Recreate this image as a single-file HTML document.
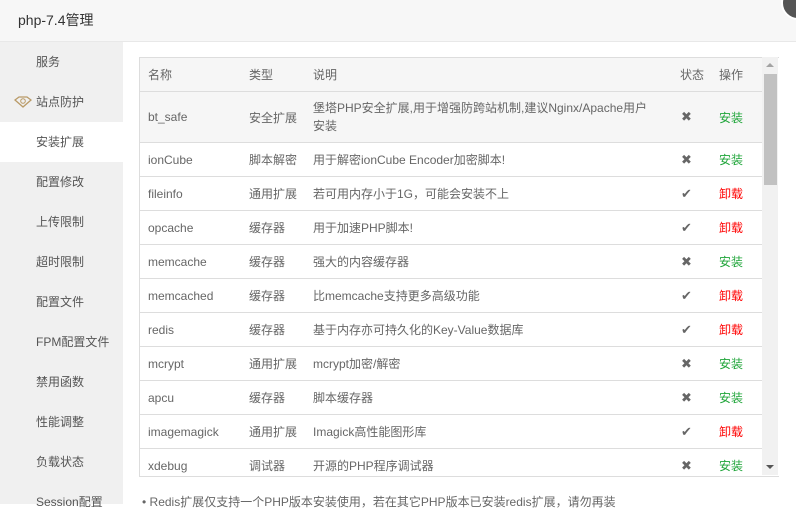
<!DOCTYPE html><html><head><meta charset="utf-8"><style>
body{margin:0;width:796px;height:504px;overflow:hidden;background:#fff;font-family:"Liberation Sans","Noto Sans CJK SC",sans-serif;font-size:12px;color:#666;position:relative}
.hd{position:absolute;left:0;top:0;width:796px;height:41px;background:#f7f7f7;border-bottom:1px solid #e8e8e8;font-size:14px;color:#333;line-height:41px;text-indent:18px}
.cl{position:absolute;left:781px;top:-14px;width:30px;height:30px;border-radius:50%;background:#555;border:2px solid #fff}
.sb{position:absolute;left:0;top:42px;width:123px;height:462px;background:#f0f0f0}
.sb div{height:40px;line-height:40px;padding-left:36px;color:#555;font-size:12px}
.sb .on{background:#fff}
.tb{position:absolute;left:139px;top:57px;width:639px;height:418px;border:1px solid #ddd;border-right:none;overflow:hidden}
table{border-collapse:collapse;width:623px;table-layout:fixed}
td{border-bottom:1px solid #ddd;height:33px;padding:0;color:#666;vertical-align:middle}
td:nth-child(1){padding-left:8px}
tr.h td{background:#f6f6f6;height:33px;color:#666}
.g{color:#20a53a}.r{color:#f00}.i{font-size:13px;color:#666;padding-left:1px}
.scr{position:absolute;left:762px;top:57px;width:16px;height:418px;background:#f1f1f1}
.th{position:absolute;left:2px;top:17px;width:13px;height:111px;background:#c1c1c1}
.ua{position:absolute;left:4px;top:6px;border:4px solid transparent;border-bottom:4px solid #a3a3a3;border-top:none}
.da{position:absolute;left:4px;top:408px;border:4px solid transparent;border-top:4px solid #555;border-bottom:none}
.ft{position:absolute;left:142px;top:493px;color:#666}
.dm{position:absolute;left:14px;top:14px;width:11px;height:8px;border:1px solid #c2a677;transform:none;clip-path:polygon(0 0,100% 0,50% 100%)}
</style></head><body>
<div class="hd">php-7.4管理</div><div class="cl"></div>
<div class="sb"><div>服务</div><div style="position:relative"><svg style="position:absolute;left:14px;top:14px" width="18" height="12" viewBox="0 0 18 12"><path d="M1 4 L5 1 H13 L17 4 L9 11 Z" fill="none" stroke="#b99a66" stroke-width="1.3"/><circle cx="9" cy="5" r="2.3" fill="none" stroke="#b99a66"/></svg>站点防护</div><div class="on">安装扩展</div><div>配置修改</div><div>上传限制</div><div>超时限制</div><div>配置文件</div><div>FPM配置文件</div><div>禁用函数</div><div>性能调整</div><div>负载状态</div><div>Session配置</div></div>
<div class="tb"><table>
<colgroup><col style="width:109px"><col style="width:64px"><col style="width:367px"><col style="width:39px"><col style="width:44px"></colgroup>
<tr class="h"><td>名称</td><td>类型</td><td>说明</td><td>状态</td><td>操作</td></tr>
<tr style="background:#f6f6f6"><td style="height:50px">bt_safe</td><td>安全扩展</td><td style="line-height:18px;padding-right:22px">堡塔PHP安全扩展,用于增强防跨站机制,建议Nginx/Apache用户安装</td><td class="i">✖</td><td class="g">安装</td></tr>
<tr><td>ionCube</td><td>脚本解密</td><td>用于解密ionCube Encoder加密脚本!</td><td class="i">✖</td><td class="g">安装</td></tr>
<tr><td>fileinfo</td><td>通用扩展</td><td>若可用内存小于1G，可能会安装不上</td><td class="i">✔</td><td class="r">卸载</td></tr>
<tr><td>opcache</td><td>缓存器</td><td>用于加速PHP脚本!</td><td class="i">✔</td><td class="r">卸载</td></tr>
<tr><td>memcache</td><td>缓存器</td><td>强大的内容缓存器</td><td class="i">✖</td><td class="g">安装</td></tr>
<tr><td>memcached</td><td>缓存器</td><td>比memcache支持更多高级功能</td><td class="i">✔</td><td class="r">卸载</td></tr>
<tr><td>redis</td><td>缓存器</td><td>基于内存亦可持久化的Key-Value数据库</td><td class="i">✔</td><td class="r">卸载</td></tr>
<tr><td>mcrypt</td><td>通用扩展</td><td>mcrypt加密/解密</td><td class="i">✖</td><td class="g">安装</td></tr>
<tr><td>apcu</td><td>缓存器</td><td>脚本缓存器</td><td class="i">✖</td><td class="g">安装</td></tr>
<tr><td>imagemagick</td><td>通用扩展</td><td>Imagick高性能图形库</td><td class="i">✔</td><td class="r">卸载</td></tr>
<tr><td>xdebug</td><td>调试器</td><td>开源的PHP程序调试器</td><td class="i">✖</td><td class="g">安装</td></tr>
</table></div>
<div class="scr"><div class="ua"></div><div class="th"></div><div class="da"></div></div>
<div class="ft">• Redis扩展仅支持一个PHP版本安装使用，若在其它PHP版本已安装redis扩展，请勿再装</div>
</body></html>
